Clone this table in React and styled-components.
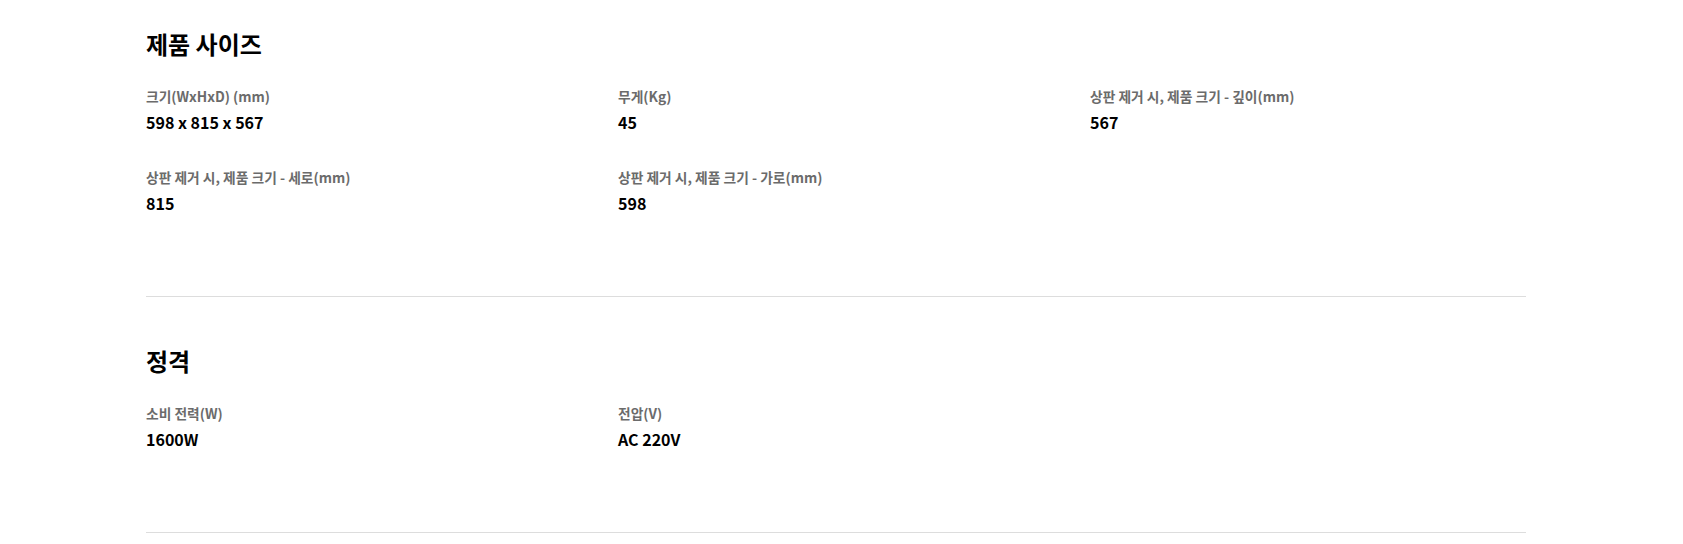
import styled, { createGlobalStyle } from "styled-components";

const GlobalStyle = createGlobalStyle`
    body {
        margin: 0;
        background: #ffffff;
        font-family: "Noto Sans CJK KR", "Noto Sans", sans-serif;
    }
`;

const Page = styled.div`
    width: 1380px;
    margin-left: 146px;
`;

const Section = styled.section`
    padding: ${(p) => (p.first ? "28px" : "48px")} 0 82px;
    border-bottom: 1px solid #dddddd;
`;

const Title = styled.h2`
    margin: 0 0 26px;
    font-size: 24px;
    line-height: 32px;
    font-weight: 700;
    color: #000000;
`;

const Grid = styled.dl`
    margin: 0;
    display: grid;
    grid-template-columns: repeat(3, 1fr);
    column-gap: 36px;
    row-gap: 34px;
`;

const Item = styled.div`
    display: flex;
    flex-direction: column;
    gap: 5px;
`;

const Label = styled.dt`
    font-size: 13.75px;
    line-height: 20px;
    font-weight: 700;
    color: #6b6b6b;
`;

const Value = styled.dd`
    margin: 0;
    font-size: 16px;
    line-height: 22px;
    font-weight: 700;
    color: #000000;
`;

const sections = [
    {
        title: "제품 사이즈",
        specs: [
            ["크기(WxHxD) (mm)", "598 x 815 x 567"],
            ["무게(Kg)", "45"],
            ["상판 제거 시, 제품 크기 - 깊이(mm)", "567"],
            ["상판 제거 시, 제품 크기 - 세로(mm)", "815"],
            ["상판 제거 시, 제품 크기 - 가로(mm)", "598"],
        ],
    },
    {
        title: "정격",
        specs: [
            ["소비 전력(W)", "1600W"],
            ["전압(V)", "AC 220V"],
        ],
    },
];

const App = () => {
    return (
        <>
            <GlobalStyle />
            <Page>
                {sections.map((s, i) => (
                    <Section key={s.title} first={i === 0}>
                        <Title>{s.title}</Title>
                        <Grid>
                            {s.specs.map(([label, value]) => (
                                <Item key={label}>
                                    <Label>{label}</Label>
                                    <Value>{value}</Value>
                                </Item>
                            ))}
                        </Grid>
                    </Section>
                ))}
            </Page>
        </>
    );
};

export default App;
